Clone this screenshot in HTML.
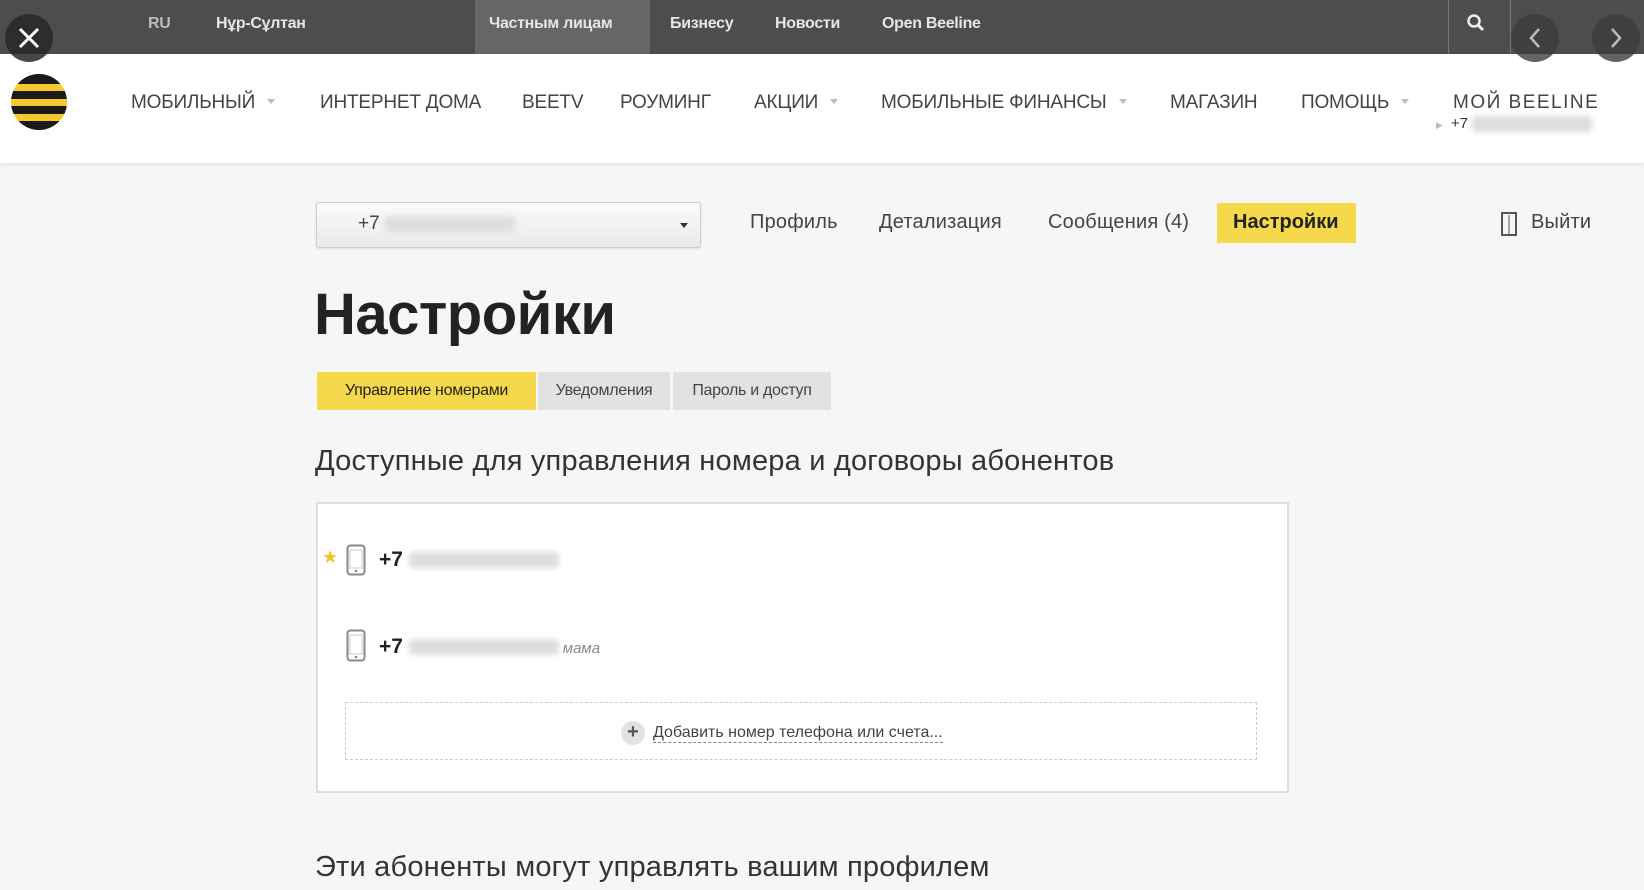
<!DOCTYPE html>
<html><head><meta charset="utf-8"><style>
*{margin:0;padding:0;box-sizing:border-box}
body{width:1644px;height:890px;overflow:hidden;background:#f6f6f6;font-family:"Liberation Sans",sans-serif;position:relative;color:#333}
.a{position:absolute;white-space:nowrap}
.top{position:absolute;left:0;top:0;width:1644px;height:54px;background:#4d4d4d}
.tl{color:#e6e6e6;font-size:16px;font-weight:bold;top:15px;letter-spacing:-0.3px}
.nav{position:absolute;left:0;top:54px;width:1644px;height:109px;background:#fff;box-shadow:0 2px 4px rgba(0,0,0,.08)}
.ni{font-size:19px;color:#444;top:92px;letter-spacing:-0.2px}
.tri{display:inline-block;width:0;height:0;border-left:4px solid transparent;border-right:4px solid transparent;border-top:5px solid #bbb;margin-left:12px;vertical-align:4px}
.circ{position:absolute;border-radius:50%;background:rgba(40,40,40,.85)}
.pl{font-size:20px;color:#444;top:211px;letter-spacing:0.2px}
.blur{display:inline-block;height:16px;background:#ddd;filter:blur(3px);vertical-align:middle;border-radius:4px}
.tab{position:absolute;top:372px;height:38px;font-size:16px;line-height:38px;text-align:center;color:#444;background:#e2e2e2;letter-spacing:-0.3px}
</style></head><body>
<div class="top"></div>
<div class="a" style="left:475px;top:0;width:175px;height:54px;background:#666"></div>
<div class="a tl" style="left:148px;color:#bbb">RU</div>
<div class="a tl" style="left:216px">Нұр-Сұлтан</div>
<div class="a tl" style="left:489px">Частным лицам</div>
<div class="a tl" style="left:670px">Бизнесу</div>
<div class="a tl" style="left:775px">Новости</div>
<div class="a tl" style="left:882px">Open Beeline</div>
<div class="a" style="left:1448px;top:0;width:1px;height:54px;background:#777"></div>
<div class="a" style="left:1510px;top:0;width:1px;height:54px;background:#777"></div>
<svg class="a" style="left:1466px;top:13px" width="20" height="20" viewBox="0 0 20 20"><circle cx="8" cy="8" r="5.5" stroke="#eee" stroke-width="2.5" fill="none"/><path d="M12 12l5 5" stroke="#eee" stroke-width="3"/></svg>
<div class="nav"></div>
<div class="circ" style="left:5px;top:14px;width:48px;height:48px"></div>
<svg class="a" style="left:17px;top:26px" width="24" height="24"><path d="M3 3L21 21M21 3L3 21" stroke="#fff" stroke-width="3"/></svg>
<div class="circ" style="left:1511px;top:14px;width:48px;height:48px;background:rgba(60,60,60,.8)"></div>
<svg class="a" style="left:1525px;top:26px" width="20" height="24"><path d="M14 3L6 12L14 21" stroke="#bbb" stroke-width="2.5" fill="none"/></svg>
<div class="circ" style="left:1592px;top:14px;width:48px;height:48px;background:rgba(60,60,60,.8)"></div>
<svg class="a" style="left:1606px;top:26px" width="20" height="24"><path d="M6 3L14 12L6 21" stroke="#bbb" stroke-width="2.5" fill="none"/></svg>
<svg class="a" style="left:10px;top:73px" width="58" height="58" viewBox="0 0 58 58"><defs><clipPath id="c"><ellipse cx="29" cy="29" rx="28" ry="28"/></clipPath></defs><g clip-path="url(#c)"><rect width="58" height="58" fill="#f5c830"/><rect y="0" width="58" height="11" fill="#1a1a1a"/><rect y="18" width="58" height="8" fill="#1a1a1a"/><rect y="33" width="58" height="8" fill="#1a1a1a"/><rect y="48" width="58" height="10" fill="#1a1a1a"/></g></svg>
<div class="a ni" style="left:131px">МОБИЛЬНЫЙ<span class="tri"></span></div>
<div class="a ni" style="left:320px">ИНТЕРНЕТ ДОМА</div>
<div class="a ni" style="left:522px">BEETV</div>
<div class="a ni" style="left:620px">РОУМИНГ</div>
<div class="a ni" style="left:754px">АКЦИИ<span class="tri"></span></div>
<div class="a ni" style="left:881px">МОБИЛЬНЫЕ ФИНАНСЫ<span class="tri"></span></div>
<div class="a ni" style="left:1170px">МАГАЗИН</div>
<div class="a ni" style="left:1301px">ПОМОЩЬ<span class="tri"></span></div>
<div class="a ni" style="left:1453px;top:92px;letter-spacing:1.5px">МОЙ BEELINE</div>
<div class="a" style="left:1436px;top:115px;font-size:15px;color:#333"><span style="color:#bbb;font-size:9px;margin-right:8px">▶</span>+7 <span class="blur" style="width:120px"></span></div>

<div class="a" style="left:316px;top:202px;width:385px;height:46px;border:1px solid #ccc;border-radius:3px;background:linear-gradient(#fbfbfb,#e9e9e9);box-shadow:0 1px 2px rgba(0,0,0,.1)"></div>
<div class="a" style="left:358px;top:213px;font-size:19px;color:#444">+7 <span class="blur" style="width:130px"></span></div>
<div class="a" style="left:680px;top:223px;border-left:4px solid transparent;border-right:4px solid transparent;border-top:5px solid #333"></div>
<div class="a pl" style="left:750px">Профиль</div>
<div class="a pl" style="left:879px">Детализация</div>
<div class="a pl" style="left:1048px">Сообщения (4)</div>
<div class="a" style="left:1217px;top:203px;width:139px;height:40px;background:#f6d94a"></div>
<div class="a pl" style="left:1233px;font-weight:bold;color:#222;letter-spacing:0">Настройки</div>
<svg class="a" style="left:1500px;top:211px" width="18" height="26"><rect x="2" y="2" width="14" height="22" fill="none" stroke="#555" stroke-width="2"/><path d="M9 4v20" stroke="#555" stroke-width="1"/></svg>
<div class="a pl" style="left:1531px">Выйти</div>

<div class="a" style="left:314px;top:281px;font-size:58px;font-weight:bold;color:#222;letter-spacing:-0.5px">Настройки</div>
<div class="tab" style="left:317px;width:219px;background:#f6d94a;color:#222">Управление номерами</div>
<div class="tab" style="left:538px;width:132px">Уведомления</div>
<div class="tab" style="left:673px;width:158px">Пароль и доступ</div>
<div class="a" style="left:315px;top:445px;font-size:29px;color:#333;letter-spacing:0.2px">Доступные для управления номера и договоры абонентов</div>

<div class="a" style="left:316px;top:502px;width:973px;height:291px;background:#fff;border:2px solid #ddd"></div>
<div class="a" style="left:322px;top:547px;color:#f2c322;font-size:18px">★</div>
<svg class="a" style="left:346px;top:544px" width="20" height="32"><rect x="1.5" y="1.5" width="17" height="29" rx="3" fill="#fff" stroke="#888" stroke-width="2"/><rect x="4" y="6" width="12" height="18" fill="#fff" stroke="#ccc"/><circle cx="10" cy="27" r="1.3" fill="#888"/></svg>
<div class="a" style="left:379px;top:548px;font-size:21px;font-weight:bold;color:#222">+7 <span class="blur" style="width:150px"></span></div>
<svg class="a" style="left:346px;top:629px" width="20" height="34"><rect x="1.5" y="1.5" width="17" height="30" rx="3" fill="#fff" stroke="#888" stroke-width="2"/><rect x="4" y="6" width="12" height="19" fill="#fff" stroke="#ccc"/><circle cx="10" cy="28" r="1.3" fill="#888"/></svg>
<div class="a" style="left:379px;top:635px;font-size:21px;font-weight:bold;color:#222">+7 <span class="blur" style="width:150px"></span><i style="font-weight:normal;font-size:15px;color:#888;margin-left:4px">мама</i></div>
<div class="a" style="left:345px;top:702px;width:912px;height:58px;border:1.5px dashed #ccc"></div>
<div class="a" style="left:621px;top:721px;width:24px;height:24px;border-radius:50%;background:#e2e2e2;color:#555;font-size:20px;line-height:23px;text-align:center;font-weight:bold">+</div>
<div class="a" style="left:653px;top:724px;font-size:16px;color:#444;border-bottom:1px dashed #888;line-height:18px">Добавить номер телефона или счета...</div>
<div class="a" style="left:315px;top:851px;font-size:29px;color:#333;letter-spacing:0.2px">Эти абоненты могут управлять вашим профилем</div>
</body></html>
